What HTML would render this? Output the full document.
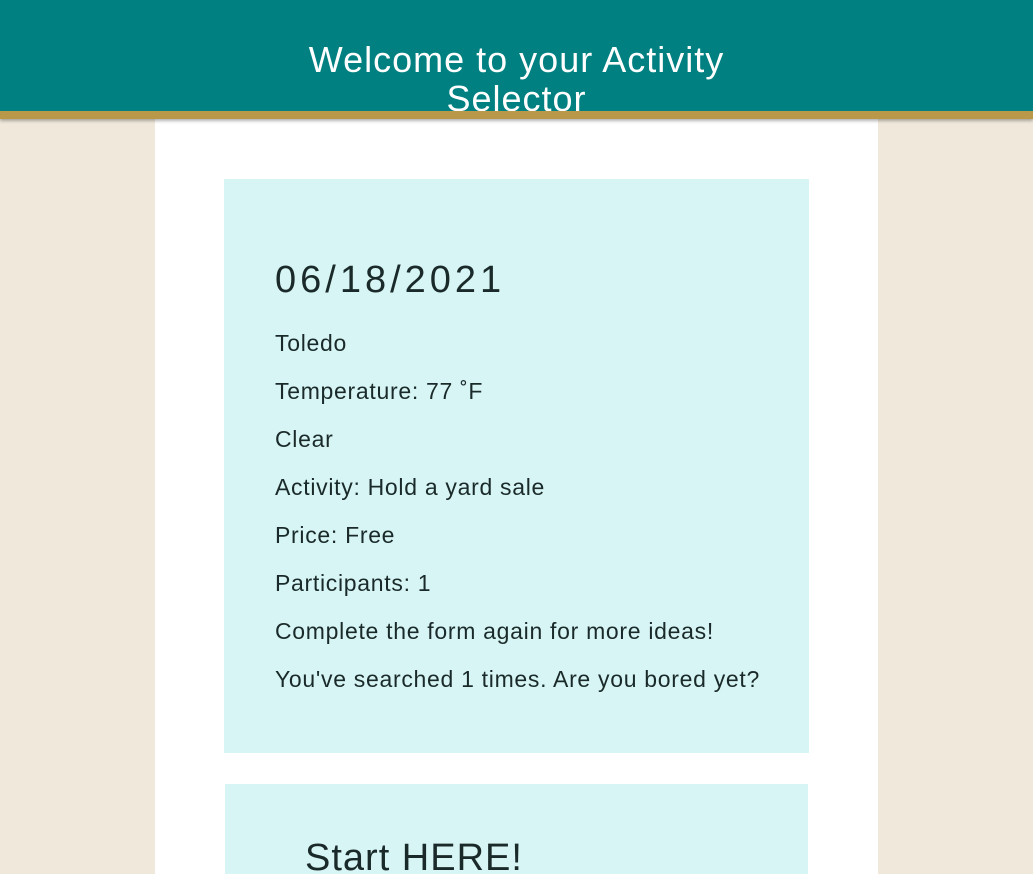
<!DOCTYPE html>
<html style="overflow:hidden"><head><style>
html,body{margin:0;width:1033px;height:874px;overflow:hidden}
body{background:#f0e9db;font-family:"Liberation Sans",sans-serif;position:relative}
.hd{position:absolute;left:0;top:0;width:1033px;height:111px;background:#008080;border-bottom:8px solid #b9984a;box-shadow:0 2px 3px rgba(0,0,0,.3);z-index:2;overflow:hidden}
.hd h1{margin:0;position:absolute;top:40px;left:0;width:1033px;text-align:center;color:#fff;font-weight:normal;font-size:36px;line-height:39px;letter-spacing:1px}
.main{position:absolute;left:155px;top:119px;width:723px;height:755px;background:#fff;overflow:hidden}
.box{position:absolute;background:#d7f5f4;color:#1a2a2a}
.b1{left:69px;top:60px;width:585px;height:574px}
.b2{left:70px;top:665px;width:583px;height:90px}
.d{position:absolute;left:51px;top:80px;font-size:38px;letter-spacing:4px}
.p{position:absolute;left:51px;font-size:23px;letter-spacing:0.7px;white-space:nowrap}
</style></head><body>
<div class="hd"><h1>Welcome to your Activity<br>Selector</h1></div>
<div class="main">
<div class="box b1">
<div class="d">06/18/2021</div>
<div class="p" style="top:151px">Toledo</div>
<div class="p" style="top:199px">Temperature: 77 ˚F</div>
<div class="p" style="top:247px">Clear</div>
<div class="p" style="top:295px">Activity: Hold a yard sale</div>
<div class="p" style="top:343px">Price: Free</div>
<div class="p" style="top:391px">Participants: 1</div>
<div class="p" style="top:439px">Complete the form again for more ideas!</div>
<div class="p" style="top:487px">You've searched 1 times. Are you bored yet?</div>
</div>
<div class="box b2"><div class="p" style="left:80px;top:53px;font-size:38px;letter-spacing:1px">Start HERE!</div></div>
</div>
</body></html>
